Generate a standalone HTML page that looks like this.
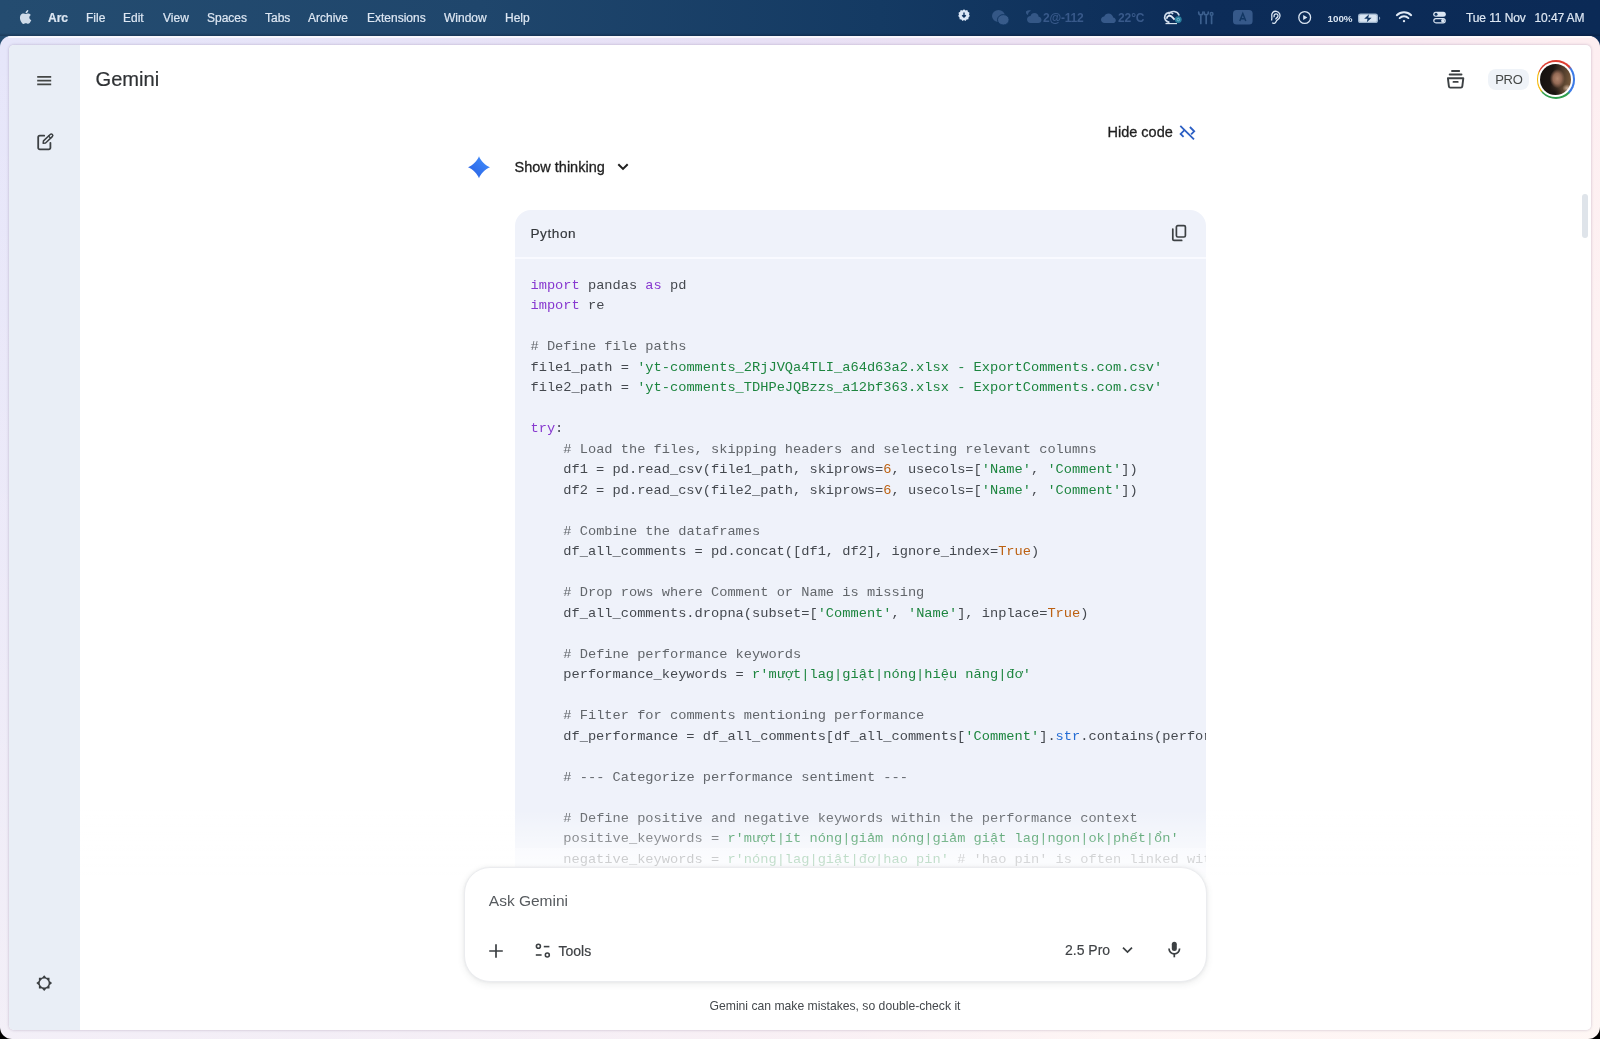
<!DOCTYPE html>
<html lang="en">
<head>
<meta charset="utf-8">
<title>Gemini</title>
<style>
*{box-sizing:border-box;margin:0;padding:0}
html,body{width:1600px;height:1039px;overflow:hidden;background:#000}
body{position:relative;font-family:"Liberation Sans",sans-serif;color:#1f1f1f}
.abs{position:absolute}
#menubar{position:absolute;left:0;top:0;width:1600px;height:52px;
  background:linear-gradient(90deg,#244c70 0%,#1f466c 30%,#143a63 55%,#0c2c58 75%,#0b2a56 100%);
  color:#dde7f3;font-size:12px;}
#mbi{position:absolute;left:0;top:0;width:1600px;height:36px;will-change:transform}
#menubar .mi{position:absolute;top:11px;line-height:14px;white-space:nowrap;-webkit-text-stroke:.2px currentColor}
#menubar .dim{color:#38598a;-webkit-text-stroke:0}
#win{position:absolute;left:0;top:36px;width:1600px;height:1003px;border-radius:11px 11px 12px 12px;
  background:linear-gradient(180deg,rgba(255,255,255,0) 0%,rgba(255,252,248,.5) 100%),linear-gradient(115deg,#e6e6fa 0%,#e8e0f5 38%,#f3e4f1 62%,#fdeef1 76%,#fef1f1 100%);}
#win:before{content:"";position:absolute;left:8px;right:8px;top:0;height:2px;background:rgba(255,255,255,.7);border-radius:2px}
#mbshade{position:absolute;left:0;top:32.500px;width:1600px;height:3.500px;background:linear-gradient(180deg,rgba(0,10,30,0),rgba(0,10,30,.28))}
#content{position:absolute;left:9px;top:9px;width:1582px;height:985px;background:#fff;border-radius:5px;overflow:hidden;
  box-shadow:0 0 3px rgba(60,40,90,.28)}
#side{position:absolute;left:0;top:0;width:70.500px;height:100%;background:#e9eef6}

#pc{position:absolute;left:-9px;top:-45px;width:1600px;height:1039px;will-change:transform}
#pc>*{position:absolute}
.t{white-space:nowrap;line-height:1}
.med{-webkit-text-stroke:.3px currentColor}
#title{left:95.500px;top:67.300px;font-size:20.100px;line-height:24px;color:#2f3235;-webkit-text-stroke:.2px #2f3235}
#codeblk{left:514.600px;top:210.300px;width:691.600px;height:700px;border-radius:16px 16px 0 0;background:#eff2fa;overflow:hidden}
#codehdr{position:absolute;left:0;top:0;width:100%;height:46.700px}
#codesep{position:absolute;left:0;top:46.700px;width:100%;height:2.300px;background:#f9faff}
#code{position:absolute;left:15.900px;top:65.700px;font-family:"Liberation Mono","DejaVu Sans Mono",monospace;font-size:13.68px;line-height:20.5px;color:#45494f;white-space:pre;tab-size:4}
#code .k{color:#8738cf}
#code .s{color:#1d853f}
#code .n{color:#bc6112}
#code .c{color:#62666b}
#code .b{color:#246cd4}
#fade{left:80px;top:810px;width:1500px;height:38px;background:linear-gradient(180deg,rgba(255,255,255,0) 0%,rgba(255,255,255,.5) 100%)}
#fade2{left:80px;top:848px;width:1500px;height:32px;background:linear-gradient(180deg,rgba(255,255,255,.68) 0%,rgba(255,255,255,.82) 100%)}
#below{left:80px;top:878px;width:1511px;height:152px;background:#fff}
#inputbox{left:463.600px;top:867.200px;width:743.200px;height:115.200px;border-radius:26px;background:#fff;border:1.500px solid #ebecef;box-shadow:0 2px 7px rgba(60,64,67,.10),0 0 3px rgba(60,64,67,.07)}
#scroll{left:1581.5px;top:194px;width:6.5px;height:44px;border-radius:3.5px;background:#dfe4ea}
</style>
</head>
<body>
<div id="menubar"><div id="mbshade"></div><div id="mbi">
  <span class="mi" style="left:48px;font-weight:bold">Arc</span>
  <span class="mi" style="left:86px">File</span>
  <span class="mi" style="left:123px">Edit</span>
  <span class="mi" style="left:163px">View</span>
  <span class="mi" style="left:207px">Spaces</span>
  <span class="mi" style="left:265px">Tabs</span>
  <span class="mi" style="left:308px">Archive</span>
  <span class="mi" style="left:367px">Extensions</span>
  <span class="mi" style="left:444px">Window</span>
  <span class="mi" style="left:505px">Help</span>

  <!-- apple -->
  <svg class="abs" style="left:17.500px;top:9px" width="14" height="16" viewBox="0 0 14 16"><path fill="#cfdbe9" d="M11.300 8.500c0-1.700 1.400-2.500 1.500-2.600-.8-1.200-2.100-1.300-2.500-1.400-1.100-.1-2.100.6-2.600.6-.6 0-1.400-.6-2.300-.6-1.200 0-2.300.7-2.900 1.700-1.200 2.100-.3 5.300.9 7 .6.800 1.300 1.800 2.200 1.700.9 0 1.200-.6 2.300-.6 1 0 1.300.6 2.300.5.900 0 1.500-.8 2.100-1.700.7-1 .9-1.900 1-2-.1 0-1.900-.7-2-2.600zM9.600 3.300c.5-.6.800-1.400.7-2.200-.7 0-1.500.5-2 1-.4.500-.8 1.300-.7 2.100.8.100 1.500-.4 2-.9z"/></svg>
  <!-- gear-download -->
  <svg class="abs" style="left:956px;top:7px" width="16" height="17" viewBox="0 0 16 17"><path fill="#dbe7f7" d="M8 2.300l1.500 1.100 1.800-.3.600 1.700 1.600.9-.5 1.800.8 1.600-1.300 1.300-.1 1.800-1.800.3-1.100 1.500L8 13.100l-1.500.9-1.100-1.500-1.800-.3-.1-1.800-1.300-1.300.8-1.600-.5-1.800 1.600-.9.600-1.700 1.800.3z"/><path d="M8 5.400v4M6.200 8.200 8 10l1.800-1.800" stroke="#0f3360" stroke-width="1.400" fill="none"/></svg>
  <!-- wechat dim -->
  <svg class="abs" style="left:991px;top:9px" width="20" height="18" viewBox="0 0 20 18"><ellipse cx="7.500" cy="7" rx="6.500" ry="6" fill="#345786"/><ellipse cx="12.300" cy="10.800" rx="5.800" ry="5.200" fill="#385b8a" stroke="#123763" stroke-width="1"/></svg>
  <!-- moon cloud dim -->
  <svg class="abs" style="left:1024px;top:9px" width="20" height="16" viewBox="0 0 20 16"><path fill="#345786" d="M3 10.500c0-2 1.600-3.500 3.500-3.500.5-1.800 2-3 4-3 2.200 0 4 1.700 4.200 3.800 1.600.2 2.800 1.500 2.800 3.100 0 1.700-1.400 3.100-3.100 3.100H6.500C4.600 14 3 12.400 3 10.500z"/><path fill="#345786" d="M2 2.500c1.500-1.300 3.500-1.500 5-.8-1.800.6-3 2.300-3 4.300-1.400-.4-2.300-1.900-2-3.500z"/></svg>
  <span class="mi dim" style="left:1043px;top:11px;font-weight:bold;letter-spacing:-.2px">2@-112</span>
  <svg class="abs" style="left:1100px;top:12px" width="18" height="12" viewBox="0 0 18 12"><path fill="#36598a" d="M4.500 11C2.600 11 1 9.600 1 7.800 1 6 2.400 4.600 4.200 4.500 4.900 2.700 6.500 1.500 8.500 1.500c2.400 0 4.400 1.800 4.700 4.100 1.500.2 2.600 1.400 2.600 2.800 0 1.500-1.300 2.600-2.800 2.600z"/></svg>
  <span class="mi dim" style="left:1118px;top:11px;font-weight:bold;letter-spacing:-.1px">22°C</span>
  <!-- creative cloud -->
  <svg class="abs" style="left:1161px;top:9px" width="24" height="17" viewBox="0 0 24 17" fill="none"><path d="M8.500 13.300a4.900 4.900 0 1 1 3.600-8.300" stroke="#cfdcec" stroke-width="1.700"/><path d="M7.500 5.300a6 6 0 0 1 10.700 1.200" stroke="#cfdcec" stroke-width="1.600"/><path d="M5.800 9.800a2.900 2.900 0 0 1 5.200-1.900l2.600 2.800" stroke="#e3ebf5" stroke-width="1.800"/><circle cx="17.300" cy="10.600" r="3.400" fill="#2a7f9e"/><circle cx="17.300" cy="10.600" r="1.300" fill="none" stroke="#8cc6d8" stroke-width=".8"/><path d="M4.500 14.600h11.500" stroke="#e3ebf5" stroke-width="1.100"/></svg>
  <!-- sliders dim -->
  <svg class="abs" style="left:1197px;top:10px" width="19" height="15" viewBox="0 0 19 15" fill="none" stroke="#3b5f8e" stroke-width="1.700" stroke-linecap="round"><path d="M3.800 5.500v8M1.700 2.200c0 3.600 4.200 3.600 4.200 0"/><path d="M9.200 5.500v8M7.100 2.200c0 3.600 4.200 3.600 4.200 0"/><path d="M14.600 5.500v8"/><circle cx="14.600" cy="3.900" r="2.100" fill="#3b5f8e" stroke="none"/><circle cx="14.600" cy="3.900" r=".7" fill="#0e3259" stroke="none"/></svg>
  <!-- input A dim -->
  <svg class="abs" style="left:1232px;top:9px" width="22" height="17" viewBox="0 0 22 17"><rect x="1" y="1" width="19.600" height="14.600" rx="3.500" fill="#36598a"/><path d="M7.800 12 10.800 4.500 13.800 12M8.800 9.700h4" stroke="#123763" stroke-width="1.500" fill="none"/></svg>
  <!-- ear -->
  <svg class="abs" style="left:1269px;top:9px" width="14" height="16" viewBox="0 0 14 16" fill="none" stroke="#dbe6f3" stroke-width="1.300"><path d="M3.200 13.800c1.300 1 3.200.6 3.800-1.100.5-1.500 2.300-2.300 3.300-3.600 1.700-2.300.4-6.300-2.900-6.800C4.300 1.800 2.200 4.200 2.800 7.500c.3 1.800.1 2.300-.3 4"/><path d="M5.200 8.200c-.6-2 .6-3.500 2-3.400 1.700.1 2.300 2 1.400 3.200-.6.800-1.700 1.200-2 2.400"/></svg>
  <!-- play circle -->
  <svg class="abs" style="left:1297px;top:10px" width="16" height="16" viewBox="0 0 16 16"><circle cx="7.700" cy="7.500" r="5.900" fill="none" stroke="#dbe6f3" stroke-width="1.300"/><path d="M6.200 4.900v5.200l4.200-2.600z" fill="#dbe6f3"/></svg>
  <span class="mi" style="left:1327.500px;top:12.400px;font-size:9.800px;font-weight:bold;letter-spacing:0;color:#dbe6f3;-webkit-text-stroke:0">100%</span>
  <!-- battery -->
  <svg class="abs" style="left:1357px;top:12px" width="25" height="12" viewBox="0 0 25 12"><rect x="1" y="1.500" width="20" height="9.500" rx="2.600" fill="#9db3cc"/><rect x="2.300" y="2.800" width="17.400" height="6.900" rx="1.500" fill="#d9e5f2"/><path d="M22.200 4.500v3.500c1.300-.3 1.300-3.200 0-3.500z" fill="#9db3cc"/><path d="M12 2.200 7.200 6.800h3.300L9.800 10.300l4.800-4.600h-3.300z" fill="#123763"/></svg>
  <!-- wifi -->
  <svg class="abs" style="left:1395px;top:10px" width="18" height="14" viewBox="0 0 18 14" fill="none" stroke="#e1eaf5" stroke-width="1.900" stroke-linecap="round"><path d="M1.800 5.200a10.300 10.300 0 0 1 14.400 0"/><path d="M4.600 8.100a6.300 6.300 0 0 1 8.800 0"/><circle cx="9" cy="11.100" r="1.200" fill="#e1eaf5" stroke="none"/></svg>
  <!-- control center -->
  <svg class="abs" style="left:1432px;top:11px" width="15" height="13" viewBox="0 0 15 13"><rect x="1.200" y=".800" width="12.600" height="5" rx="2.500" fill="#dbe6f3"/><circle cx="4" cy="3.300" r="1.500" fill="#123763"/><rect x="1.800" y="7.600" width="11.400" height="4.200" rx="2.100" fill="none" stroke="#dbe6f3" stroke-width="1.200"/><circle cx="10.800" cy="9.700" r="1.700" fill="#dbe6f3"/></svg>
  <span class="mi" style="left:1466px;letter-spacing:-.1px">Tue 11 Nov</span>
  <span class="mi" style="left:1534.500px;letter-spacing:-.1px">10:47 AM</span>
</div></div>
<div id="win">
  <div id="content">
    <div id="side"></div>

    <div id="pc">
      <div id="title" class="t">Gemini</div>

      <div class="t med" style="left:1107.5px;top:124px;font-size:14.5px;line-height:16px;color:#1f1f1f">Hide code</div>
      <div class="t med" style="left:514.5px;top:159px;font-size:14.5px;line-height:16px;color:#1f1f1f">Show thinking</div>

      <div id="codeblk">
        <div id="codehdr"><div class="t" style="position:absolute;left:15.900px;top:15.300px;font-size:13.600px;line-height:16px;letter-spacing:.55px;color:#33373b;-webkit-text-stroke:.15px #33373b">Python</div></div>
        <div id="codesep"></div>
        <pre id="code"><span class="k">import</span> pandas <span class="k">as</span> pd
<span class="k">import</span> re

<span class="c"># Define file paths</span>
file1_path = <span class="s">'yt-comments_2RjJVQa4TLI_a64d63a2.xlsx - ExportComments.com.csv'</span>
file2_path = <span class="s">'yt-comments_TDHPeJQBzzs_a12bf363.xlsx - ExportComments.com.csv'</span>

<span class="k">try</span>:
    <span class="c"># Load the files, skipping headers and selecting relevant columns</span>
    df1 = pd.read_csv(file1_path, skiprows=<span class="n">6</span>, usecols=[<span class="s">'Name'</span>, <span class="s">'Comment'</span>])
    df2 = pd.read_csv(file2_path, skiprows=<span class="n">6</span>, usecols=[<span class="s">'Name'</span>, <span class="s">'Comment'</span>])

    <span class="c"># Combine the dataframes</span>
    df_all_comments = pd.concat([df1, df2], ignore_index=<span class="n">True</span>)

    <span class="c"># Drop rows where Comment or Name is missing</span>
    df_all_comments.dropna(subset=[<span class="s">'Comment'</span>, <span class="s">'Name'</span>], inplace=<span class="n">True</span>)

    <span class="c"># Define performance keywords</span>
    performance_keywords = <span class="s">r'mượt|lag|giật|nóng|hiệu năng|đơ'</span>

    <span class="c"># Filter for comments mentioning performance</span>
    df_performance = df_all_comments[df_all_comments[<span class="s">'Comment'</span>].<span class="b">str</span>.contains(performance_keywords, case=<span class="n">False</span>, na=<span class="n">False</span>)]

    <span class="c"># --- Categorize performance sentiment ---</span>

    <span class="c"># Define positive and negative keywords within the performance context</span>
    positive_keywords = <span class="s">r'mượt|ít nóng|giảm nóng|giảm giật lag|ngon|ok|phết|ổn'</span>
    negative_keywords = <span class="s">r'nóng|lag|giật|đơ|hao pin'</span> <span class="c"># 'hao pin' is often linked with performance</span>

    df_positive = df_performance[df_performance[<span class="s">'Comment'</span>].<span class="b">str</span>.contains(positive_keywords, case=<span class="n">False</span>, na=<span class="n">False</span>)]</pre>
      </div>
      <div id="fade"></div><div id="fade2"></div>
      <div id="below"></div>
      <div id="inputbox"></div>
      <div class="t" style="left:488.800px;top:891.800px;font-size:15.500px;line-height:18px;color:#575b5f">Ask Gemini</div>
      <div class="t" style="left:558.500px;top:943px;font-size:14px;line-height:16px;color:#3f4245;-webkit-text-stroke:.2px #3f4245">Tools</div>
      <div class="t" style="left:1065px;top:941.500px;font-size:14px;line-height:16px;color:#3f4245;-webkit-text-stroke:.15px #3f4245">2.5 Pro</div>
      <div class="t" id="disc" style="left:709.500px;top:999.400px;font-size:12.180px;line-height:14px;color:#45494d">Gemini can make mistakes, so double-check it</div>
      <div id="scroll"></div>

      <!-- hamburger -->
      <svg style="left:36px;top:72px" width="18" height="18" viewBox="0 0 18 18"><path d="M1.200 4.800h14M1.200 8.600h14M1.200 12.400h14" stroke="#444746" stroke-width="1.700" fill="none"/></svg>
      <!-- new chat -->
      <svg style="left:34px;top:130px" width="24" height="24" viewBox="0 0 24 24" fill="none" stroke="#3c4043" stroke-width="1.800" stroke-linecap="round" stroke-linejoin="round"><path d="M10.200 5.700H5.800a1.600 1.600 0 0 0-1.600 1.600v10.400a1.600 1.600 0 0 0 1.600 1.600h9a1.600 1.600 0 0 0 1.600-1.600V12.800"/><g transform="rotate(-43.500 13.700 8.900)"><path d="M7.400 8.900l1.900-1.500h9.300a1.500 1.500 0 0 1 0 3h-9.300z" stroke-width="1.500" fill="#e9eef6"/><path d="M16.300 7.400v3" stroke-width="1.300"/></g></svg>
      <!-- gear -->
      <svg style="left:34px;top:973px" width="20" height="20" viewBox="0 0 20 20"><path d="M10.20 2.20 L12.42 4.74 L15.50 4.80 L15.56 7.88 L18.10 10.10 L15.56 12.32 L15.50 15.40 L12.42 15.46 L10.20 18.00 L7.98 15.46 L4.90 15.40 L4.84 12.32 L2.30 10.10 L4.84 7.88 L4.90 4.80 L7.98 4.74Z M14.70 10.10 A4.5 4.5 0 1 0 5.70 10.10 A4.5 4.5 0 1 0 14.70 10.10Z" fill="#3c4043" fill-rule="evenodd"/></svg>
      <!-- spark -->
      <svg style="left:467px;top:155px" width="24" height="24" viewBox="0 0 24 24"><defs><linearGradient id="sg" x1="0" y1="1" x2="1" y2="0"><stop offset="0" stop-color="#2a5fe0"/><stop offset=".5" stop-color="#3577f0"/><stop offset="1" stop-color="#4695ff"/></linearGradient></defs><path d="M12.00 1.20 C13.50 5.60 18.60 10.70 23.00 12.20 C18.60 13.70 13.50 18.80 12.00 23.20 C10.50 18.80 5.40 13.70 1.00 12.20 C5.40 10.70 10.50 5.60 12.00 1.20Z" fill="url(#sg)"/></svg>
      <!-- chevron show thinking -->
      <svg style="left:615px;top:160px" width="16" height="14" viewBox="0 0 16 14" fill="none" stroke="#1f1f1f" stroke-width="2" stroke-linecap="butt" stroke-linejoin="miter"><path d="M3.300 4.200 8 8.900l4.700-4.700"/></svg>
      <!-- code off -->
      <svg style="left:1177px;top:122px" width="20" height="20" viewBox="0 0 20 20" fill="none" stroke="#2c5fc4" stroke-width="1.8"><path d="M3.300 3.800 17 17.300"/><path d="M7.200 8.300 3.600 11.900l3 3"/><path d="M12.900 5l4.300 4.300-3.100 3.100"/></svg>
      <!-- copy -->
      <svg style="left:1170px;top:223px" width="20" height="20" viewBox="0 0 20 20" fill="none" stroke="#3c4043" stroke-width="1.7" stroke-linejoin="round" stroke-linecap="round"><rect x="6.400" y="2.700" width="9" height="11.300" rx="1.400"/><path d="M2.800 6v10.200a1.200 1.200 0 0 0 1.200 1.200h7.700"/></svg>
      <!-- archive -->
      <svg style="left:1445px;top:68px" width="22" height="22" viewBox="0 0 22 22" fill="none" stroke="#3c4043" stroke-width="1.9" stroke-linecap="round" stroke-linejoin="round"><path d="M7 3h7.200"/><path d="M4.700 6.500h11.800"/><path d="M2.900 10.300h15.400l-1 8.100a1.400 1.400 0 0 1-1.400 1.200H5.300a1.400 1.400 0 0 1-1.400-1.200z"/><path d="M8.400 13.900h4.400" stroke-width="1.700"/></svg>
      <!-- PRO -->
      <div style="left:1488px;top:69px;width:41px;height:21px;border-radius:8px;background:#eff3f8"></div>
      <div class="t" style="left:1495.300px;top:72.300px;font-size:13px;line-height:15px;letter-spacing:-.35px;color:#444746">PRO</div>
      <!-- avatar -->
      <div style="left:1536.500px;top:60px;width:38.500px;height:38.500px;border-radius:50%;background:conic-gradient(from 0deg,#de3d31 0deg,#de3d31 45deg,#3d7be6 55deg,#3d7be6 130deg,#309f4e 140deg,#309f4e 225deg,#f4b808 235deg,#f4b808 290deg,#de3d31 300deg,#de3d31 360deg)"></div>
      <div style="left:1538.300px;top:61.800px;width:34.900px;height:34.900px;border-radius:50%;background:#fff"></div>
      <div style="left:1540.300px;top:63.800px;width:31px;height:31px;border-radius:50%;background:radial-gradient(ellipse 5px 4px at 88% 78%,#cdb09a 0%,rgba(205,176,154,0) 100%),radial-gradient(ellipse 7.500px 9.500px at 56% 47%,#b3876f 0%,#946a55 55%,rgba(90,62,46,0) 100%),radial-gradient(ellipse 9px 7px at 45% 95%,#15110f 0%,rgba(21,17,15,0) 100%),linear-gradient(100deg,#14100e 0%,#1c1512 38%,#4a3729 62%,#80603f 100%)"></div>
      <!-- plus -->
      <svg style="left:486px;top:941px" width="20" height="20" viewBox="0 0 20 20" fill="none" stroke="#3c4043" stroke-width="1.700"><path d="M10 3.200v13.600M3.200 10h13.600"/></svg>
      <!-- tools -->
      <svg style="left:533px;top:941px" width="20" height="20" viewBox="0 0 20 20" fill="none" stroke="#3c4043" stroke-width="1.600"><circle cx="5.400" cy="5.200" r="2"/><path d="M10.800 5.600h5.600"/><path d="M2.800 14h5.800"/><circle cx="14.300" cy="14" r="2"/></svg>
      <!-- chevron model -->
      <svg style="left:1119px;top:943px" width="16" height="14" viewBox="0 0 16 14" fill="none" stroke="#3c4043" stroke-width="1.700"><path d="M4 4.600 8.500 9l4.500-4.400"/></svg>
      <!-- mic -->
      <svg style="left:1164px;top:939px" width="20" height="22" viewBox="0 0 20 22" fill="none"><rect x="7.800" y="2.800" width="5" height="9.200" rx="2.500" fill="#3c4043"/><path d="M5 9.600a5.300 5.300 0 0 0 10.600 0" stroke="#3c4043" stroke-width="1.700"/><path d="M10.300 15v3.300" stroke="#3c4043" stroke-width="1.700"/></svg>
    </div>
  </div>
</div>
</body>
</html>
